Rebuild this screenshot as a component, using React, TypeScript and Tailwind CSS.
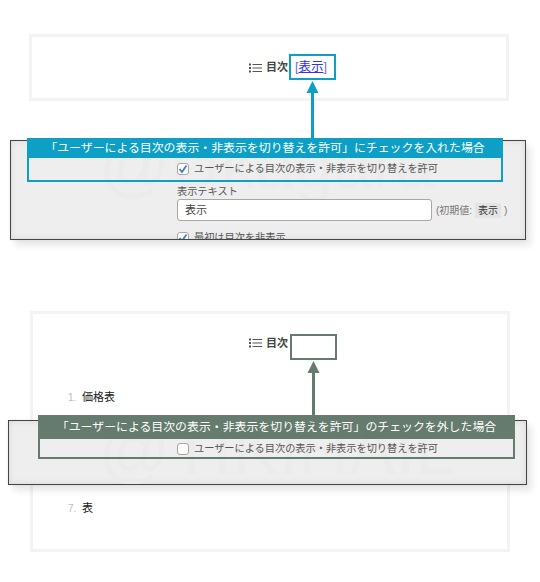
import React from 'react';

const FONT = '[font-family:"Liberation_Sans","Noto_Sans_CJK_JP",sans-serif]';
const OPTION = 'ユーザーによる目次の表示・非表示を切り替えを許可';

const ListIcon: React.FC = () => (
  <svg width="13" height="10" viewBox="0 0 13 10" className="shrink-0">
    <rect x="0" y="0.5" width="2" height="2" fill="#555" />
    <rect x="0" y="4" width="2" height="2" fill="#555" />
    <rect x="0" y="7.5" width="2" height="2" fill="#555" />
    <rect x="3.5" y="1" width="9.5" height="1" fill="#555" />
    <rect x="3.5" y="4.5" width="9.5" height="1" fill="#555" />
    <rect x="3.5" y="8" width="9.5" height="1" fill="#555" />
  </svg>
);

const Checkbox: React.FC<{ checked?: boolean }> = ({ checked }) => (
  <span className="w-[12px] h-[12px] shrink-0 rounded-[3px] border border-[#a5a5a5] bg-white flex items-center justify-center">
    {checked && (
      <svg width="10" height="10" viewBox="0 0 10 10">
        <path d="M1.5 5 L4 8 L8.5 1.5" fill="none" stroke="#3f7fc0" strokeWidth="1.8" />
      </svg>
    )}
  </span>
);

const Arrow: React.FC<{ color: string; height: number }> = ({ color, height }) => (
  <svg width="13" height={height} viewBox={`0 0 13 ${height}`}>
    <path d={`M6.5 0 L12.5 12 L0.5 12 Z`} fill={color} />
    <rect x="5" y="11" width="3" height={height - 11} fill={color} />
  </svg>
);

const TocTitle: React.FC = () => (
  <div className="flex items-center">
    <ListIcon />
    <span className="ml-[4px] text-[11px] font-bold text-[#444]">目次</span>
  </div>
);

const App: React.FC = () => {
  return (
    <div className={`relative w-[540px] h-[582px] bg-white overflow-hidden ${FONT}`}>
      {/* checked */}
      <div className="h-[300px] pt-[34px] pl-[29px]">
        <div className="w-[480px] h-[67px] border-[3px] border-[#f3f3f3] pl-[217px] flex items-center">
          <TocTitle />
          <span className="ml-[7px] text-[12.5px] text-[#6a6ae0]">
            [<span className="text-[#3333ee] underline">表示</span>]
          </span>
        </div>
      </div>

      {/* unchecked */}
      <div className="h-[282px] pt-[11px] pl-[30px]">
        <div className="w-[480px] h-[241px] border-[3px] border-[#f3f3f3] flex flex-col">
          <div className="pl-[216px] h-[26px] mt-[16px] flex items-center">
            <TocTitle />
          </div>
          <div className="mt-[33px] pl-[35px] flex items-center h-[16px] text-[11px] text-[#222]">
            <span className="w-[14px] text-[10px] text-[#bbb]">1.</span>
            <span>価格表</span>
          </div>
          <div className="mt-[95px] pl-[35px] flex items-center h-[16px] text-[11px] text-[#222]">
            <span className="w-[14px] text-[10px] text-[#bbb]">7.</span>
            <span>表</span>
          </div>
        </div>
      </div>

      {/* settings screenshot, checked */}
      <div className="absolute left-[10px] top-[140px] w-[516px] h-[100px] border border-[#444] bg-[#eeeeee] overflow-hidden shadow-[inset_0_0_6px_rgba(0,0,0,0.1),5px_6px_7px_rgba(0,0,0,0.09),0_0_3px_rgba(0,0,0,0.08)]">
        <div className="absolute left-[88px] top-[-12px] text-[70px] leading-none text-[#ebebeb] whitespace-nowrap">@Ukagara</div>
        <div className="relative pl-[166px] pt-[22px] text-[10.2px] text-[#555]">
          <div className="flex items-center h-[12px]">
            <Checkbox checked />
            <span className="ml-[5px]">{OPTION}</span>
          </div>
          <div className="mt-[11px] h-[12px] leading-[12px]">表示テキスト</div>
          <div className="mt-[1px] flex items-center">
            <div className="w-[255px] h-[22px] rounded-[3px] border border-[#a8a8a8] bg-white pl-[7px] flex items-center text-[11px] text-[#444]">表示</div>
            <span className="ml-[4px] text-[10px] text-[#777]">(初期値:</span>
            <span className="ml-[3px] px-[3px] bg-[#e4e4e4] text-[10px] text-[#333]">表示</span>
            <span className="ml-[3px] text-[10px] text-[#777]">)</span>
          </div>
          <div className="mt-[11px] flex items-center h-[12px]">
            <Checkbox checked />
            <span className="ml-[5px]">最初は目次を非表示</span>
          </div>
        </div>
      </div>

      {/* settings screenshot, unchecked */}
      <div className="absolute left-[8px] top-[420px] w-[519px] h-[65px] border border-[#444] bg-[#eeeeee] overflow-hidden shadow-[inset_0_0_6px_rgba(0,0,0,0.1),5px_6px_7px_rgba(0,0,0,0.09),0_0_3px_rgba(0,0,0,0.08)]">
        <div className="absolute left-[90px] top-[-6px] text-[70px] leading-none text-[#ebebeb] whitespace-nowrap">@TIKIHAIL</div>
        <div className="relative pl-[168px] pt-[22px] text-[10.2px] text-[#555]">
          <div className="flex items-center h-[12px]">
            <Checkbox />
            <span className="ml-[5px]">{OPTION}</span>
          </div>
        </div>
      </div>

      {/* callouts */}
      <div className="absolute left-[289px] top-[54px] w-[47px] h-[26px] border-[2.5px] border-[#0e9fc7]" />
      <div className="absolute left-[306px] top-[81px] flex"><Arrow color="#0e9fc7" height={58} /></div>
      <div className="absolute left-[27px] top-[138px] w-[476px] h-[44px] border-2 border-[#0e9fc7]">
        <div className="h-[18px] bg-[#0e9fc7] text-white text-[11.9px] leading-[16px] text-center whitespace-nowrap">
          「{OPTION}」にチェックを入れた場合
        </div>
      </div>

      <div className="absolute left-[290px] top-[334px] w-[47px] h-[26px] border-2 border-[#647b6e]" />
      <div className="absolute left-[307px] top-[361px] flex"><Arrow color="#647b6e" height={55} /></div>
      <div className="absolute left-[38px] top-[415px] w-[477px] h-[44px] border-2 border-[#647b6e]">
        <div className="h-[22px] bg-[#647b6e] text-white text-[11.9px] leading-[20px] text-center whitespace-nowrap">
          「{OPTION}」のチェックを外した場合
        </div>
      </div>
    </div>
  );
};

export default App;
